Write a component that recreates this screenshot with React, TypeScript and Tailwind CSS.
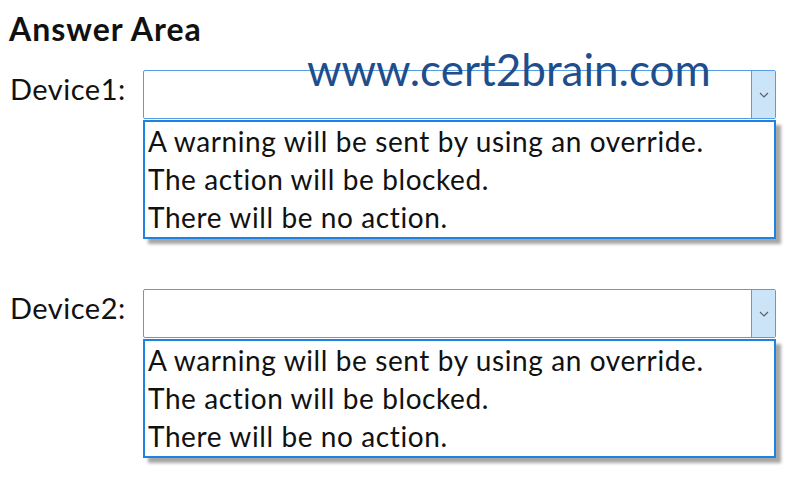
import React from "react";

const options = [
  "A warning will be sent by using an override.",
  "The action will be blocked.",
  "There will be no action.",
];

function Dropdown({ label }: { label: string }) {
  return (
    <div className="flex">
      <div className="w-[143px] pl-[10px] text-[29px] leading-[38px] tracking-[0.5px] text-[#111]">
        {label}
      </div>
      <div className="w-[633px]">
        <div className="flex h-[49px] rounded-[2px] border border-[#569de5] bg-white">
          <div className="flex-1" />
          <div className="flex w-[24px] items-center justify-center border-l border-[#569de5] bg-[#cce4f7]">
            <svg width="10" height="6" viewBox="0 0 10 6" fill="none">
              <path d="M1 1l4 4 4-4" stroke="#606060" strokeWidth="1.2" />
            </svg>
          </div>
        </div>
        <div className="mt-[1px] h-[119px] border-2 border-[#1e82e0] bg-white pl-[3px] shadow-[5px_5px_3px_rgba(0,0,0,0.35)]">
          {options.map((o) => (
            <div key={o} className="text-[28px] leading-[38px] tracking-[0.6px] text-[#111]">
              {o}
            </div>
          ))}
        </div>
      </div>
    </div>
  );
}

export default function App() {
  return (
    <div
      className="relative h-[478px] w-[801px] overflow-hidden bg-white"
      style={{ fontFamily: "Lato, 'Open Sans', sans-serif" }}
    >
      <div className="pl-[9px] pt-[11px] text-[32px] font-bold leading-[36px] tracking-[1px] text-[#111]">
        Answer Area
      </div>
      <div className="pt-[23px]">
        <Dropdown label="Device1:" />
      </div>
      <div className="pt-[50px]">
        <Dropdown label="Device2:" />
      </div>
      <div className="absolute left-[307px] top-[44px] text-[44px] leading-[50px] text-[#1f4e8c]">
        www.cert2brain.com
      </div>
    </div>
  );
}
